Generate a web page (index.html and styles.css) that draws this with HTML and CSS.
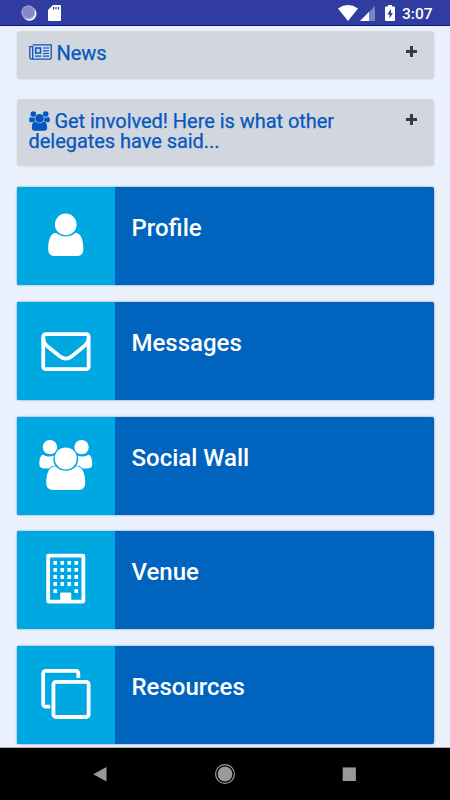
FILE: index.html
```html
<!DOCTYPE html>
<html lang="en">
<head>
  <meta charset="UTF-8" />
  <meta name="viewport" content="width=device-width, initial-scale=1.0"/>
  <title>Event | Home</title>
  <link rel="stylesheet" href="styles.css">
</head>
<body>

<header class="status-bar">
  <div class="status-left">
    <svg class="icon-sync" viewBox="0 0 16 16">
      <circle cx="8.5" cy="8.7" r="7" fill="#fff"/>
      <circle cx="7.3" cy="7.3" r="6.9" fill="#858ac7"/>
      <circle cx="7.3" cy="7.3" r="6.3" fill="none" stroke="#b5b8df" stroke-width="1.2" stroke-dasharray="1 1"/>
    </svg>
    <svg class="icon-sd" viewBox="0 0 13 16">
      <path d="M5 0h7a1 1 0 0 1 1 1v14a1 1 0 0 1-1 1H1a1 1 0 0 1-1-1V5z" fill="#fff"/>
      <path d="M5.500 2v2.600M8 2v2.600M10.500 2v2.600" stroke="#303c9f" stroke-width="1.2"/>
    </svg>
  </div>
  <div class="status-right">
    <svg class="icon-wifi" viewBox="0 0 20 16"><path d="M0 3.4Q10-3.4 20 3.4L10 16z" fill="#fff"/></svg>
    <svg class="icon-signal" viewBox="0 0 15 15">
      <path d="M15 0v15H0z" fill="#7c83c3"/>
      <path d="M9 6v9H0z" fill="#fff"/>
    </svg>
    <svg class="icon-battery" viewBox="0 0 10 16">
      <path d="M3 0h4v1.5h2a1 1 0 0 1 1 1V15a1 1 0 0 1-1 1H1a1 1 0 0 1-1-1V2.500a1 1 0 0 1 1-1h2z" fill="#fff"/>
      <path d="M6 3.800L2.300 9.500h2.200v4L7.900 8H6z" fill="#303c9f"/>
    </svg>
    <span class="clock">3:07</span>
  </div>
</header>

<main class="content">
  <section class="panel">
    <h4 class="panel-title">
      <svg class="icon-news" viewBox="0 0 23 16" fill="none" stroke="#0558bd">
        <path d="M3.700.8h18.500v12.900a1.400 1.400 0 0 1-1.400 1.400H2.300a1.500 1.500 0 0 1-1.500-1.500V2.700h2.900v11a1.400 1.400 0 0 1-1.400 1.400" stroke-width="1.300"/>
        <path d="M6.700 4h4.800v5H6.700z" stroke-width="1.500"/>
        <path d="M14 4h6M14 6.800h6M14 9.500h6M6 12.200h6.500M14 12.200h6" stroke-width="1.200"/>
      </svg>
      News
    </h4>
    <svg class="icon-plus" viewBox="0 0 11 11"><path d="M5.500 0v11M0 5.500h11" stroke="#3a3a3a" stroke-width="3"/></svg>
  </section>

  <section class="panel panel-involved">
    <h4 class="panel-title">
      <svg class="icon-group" viewBox="22.500 22.500 53 51" fill="#0558bd">
        <circle cx="33.200" cy="30.100" r="7.200"/>
        <circle cx="64.800" cy="30.100" r="7.200"/>
        <circle cx="49" cy="41.400" r="11"/>
        <path d="M26 37.400C29.500 40 34 40 37.200 38.500C36 42 36.500 45.500 38.500 48.500Q34.500 48.700 32 51.400H27Q22.500 51.400 22.500 46.500Q22.500 39.500 26 37.400z"/>
        <path d="M72 37.400C68.500 40 64 40 60.800 38.500C62 42 61.500 45.500 59.500 48.500Q63.500 48.700 66 51.400H71Q75.500 51.400 75.500 46.500Q75.500 39.500 72 37.400z"/>
        <path d="M38.500 49.200C45 55.300 53 55.300 59.500 49.200C66 49.500 68.500 57 68.500 66Q68.500 73 61.500 73H36.500Q29.500 73 29.500 66C29.500 57 32 49.500 38.500 49.200z"/>
      </svg>
      Get involved! Here is what other delegates have said...
    </h4>
    <svg class="icon-plus" viewBox="0 0 11 11"><path d="M5.500 0v11M0 5.500h11" stroke="#3a3a3a" stroke-width="3"/></svg>
  </section>

  <nav class="menu">
    <a class="menu-item">
      <svg class="menu-icon" viewBox="0.500 0 98 98" fill="#fff">
        <circle cx="49" cy="37.400" r="10.800"/>
        <path d="M39.300 45.800C45 50.800 53 50.800 58.700 45.800C64.500 46 66.600 54 66.600 62Q66.600 69 60.500 69H37.500Q31.400 69 31.400 62C31.400 54 33.500 46 39.300 45.800z"/>
      </svg>
      <span class="menu-label">Profile</span>
    </a>
    <a class="menu-item">
      <svg class="menu-icon" viewBox="0.500 0 98 98" fill="none" stroke="#fff" stroke-width="3.800">
        <rect x="26.500" y="32.100" width="45.400" height="35.100" rx="2.500"/>
        <path d="M26.500 36C26.500 41 29.500 43.500 34 47L43 54.200Q49 59 55 54.200L64 47C68.500 43.500 71.900 41 71.900 36"/>
      </svg>
      <span class="menu-label">Messages</span>
    </a>
    <a class="menu-item">
      <svg class="menu-icon" viewBox="0.500 0 98 98" fill="#fff">
        <circle cx="33.200" cy="30.100" r="7.200"/>
        <circle cx="64.800" cy="30.100" r="7.200"/>
        <circle cx="49" cy="41.400" r="11"/>
        <path d="M26 37.400C29.500 40 34 40 37.200 38.500C36 42 36.500 45.500 38.500 48.500Q34.500 48.700 32 51.400H27Q22.500 51.400 22.500 46.500Q22.500 39.500 26 37.400z"/>
        <path d="M72 37.400C68.500 40 64 40 60.800 38.500C62 42 61.500 45.500 59.500 48.500Q63.500 48.700 66 51.400H71Q75.500 51.400 75.500 46.500Q75.500 39.500 72 37.400z"/>
        <path d="M38.500 49.200C45 55.300 53 55.300 59.500 49.200C66 49.500 68.500 57 68.500 66Q68.500 73 61.500 73H36.500Q29.500 73 29.500 66C29.500 57 32 49.500 38.500 49.200z"/>
      </svg>
      <span class="menu-label">Social Wall</span>
    </a>
    <a class="menu-item">
      <svg class="menu-icon" viewBox="0.500 0 98 98" fill="none" stroke="#fff" stroke-width="3.800">
        <rect x="31.400" y="24.600" width="35.200" height="46" rx=".5"/>
        <path d="M36.700 31.900h25M36.700 38.900h25M36.700 46h25M36.700 53h25" stroke-dasharray="3.600 3.400"/>
        <path d="M36.700 60.200h3.600M57.700 60.200h3.600"/>
        <path d="M44.500 61.600h9a1 1 0 0 1 1 1v8h-11v-8a1 1 0 0 1 1-1z" fill="#fff" stroke="none"/>
      </svg>
      <span class="menu-label">Venue</span>
    </a>
    <a class="menu-item">
      <svg class="menu-icon" viewBox="0.500 0 98 98" fill="none" stroke="#fff" stroke-width="3.800">
        <path d="M61.600 32V27.300a2.500 2.500 0 0 0-2.500-2.500H28.900a2.500 2.500 0 0 0-2.500 2.500V58.200a2.500 2.500 0 0 0 2.500 2.500H33.500"/>
        <rect x="36.700" y="35.800" width="35.200" height="35.200" rx="2.500"/>
      </svg>
      <span class="menu-label">Resources</span>
    </a>
  </nav>
</main>

<footer class="nav-bar">
  <svg class="nav-icon" viewBox="0 0 22 22"><path d="M16.500 4v14.400L3.200 11.200z" fill="#999"/></svg>
  <svg class="nav-icon" viewBox="0 0 22 22">
    <circle cx="11" cy="11" r="9.400" fill="none" stroke="#999" stroke-width="1.200"/>
    <circle cx="11" cy="11" r="7.400" fill="#999"/>
  </svg>
  <svg class="nav-icon" viewBox="0 0 22 22"><path d="M4.700 4.400h13.200v13.600H4.700z" fill="#999"/></svg>
</footer>

</body>
</html>
```
FILE: styles.css
```css
* {
  margin: 0;
  padding: 0;
  box-sizing: border-box;
  font-family: Roboto, sans-serif;
}

body {
  height: 800px;
  display: flex;
  flex-direction: column;
  background: #eaf1fd;
  overflow: hidden;
}

svg {
  display: block;
  flex: none;
}

.status-bar {
  flex: none;
  height: 26px;
  display: flex;
  justify-content: space-between;
  padding: 5px 17.5px 0 21px;
  background: #303c9f;
  border-bottom: 1px solid #0b1289;
}

.status-left,
.status-right {
  display: flex;
  align-items: flex-start;
}

.icon-sync {
  width: 16px;
  height: 16px;
  margin-right: 11px;
}

.icon-sd {
  width: 13px;
  height: 16px;
}

.icon-wifi {
  width: 20px;
  height: 16px;
  margin-right: 2px;
}

.icon-signal {
  width: 15px;
  height: 15px;
  margin: 1px 10px 0 0;
}

.icon-battery {
  width: 10px;
  height: 16px;
  margin-right: 7px;
}

.clock {
  color: #fff;
  font-size: 15.5px;
  font-weight: 500;
  line-height: 18px;
}

.content {
  flex: 1;
  min-height: 0;
  padding: 5px 16px 0 16.5px;
  overflow: hidden;
}

.panel {
  display: flex;
  justify-content: space-between;
  align-items: flex-start;
  height: 47px;
  margin-bottom: 21px;
  padding: 12px 17px 0 12px;
  background: #d2d6df;
  border-radius: 3px;
  box-shadow: 0 1px 2px rgba(0, 0, 0, 0.15);
}

.panel-involved {
  height: 66px;
  margin-bottom: 22px;
}

.panel-title {
  width: 330px;
  color: #0558bd;
  font-size: 20px;
  font-weight: 400;
  line-height: 20px;
  letter-spacing: -0.04px;
  -webkit-text-stroke: 0.25px #0558bd;
}

.panel-title svg {
  display: inline-block;
}

.icon-news {
  width: 23px;
  height: 16px;
  vertical-align: 0;
}

.icon-group {
  width: 21px;
  height: 20px;
  vertical-align: -1px;
  margin: -3px 0 -2px;
}

.icon-plus {
  width: 11px;
  height: 11px;
  margin-top: 3px;
}

.menu-item {
  display: flex;
  height: 98px;
  margin-bottom: 16.75px;
  background: #0063be;
  border-radius: 2px;
  box-shadow: 0 0 2px rgba(0, 50, 110, 0.6);
  overflow: hidden;
}

.menu-icon {
  width: 98.5px;
  height: 98px;
  background: #00a8e2;
}

.menu-label {
  padding: 26px 0 0 16.5px;
  color: #fff;
  font-size: 24px;
  font-weight: 500;
  line-height: 30px;
}

.nav-bar {
  flex: none;
  height: 53px;
  display: flex;
  justify-content: center;
  gap: 102px;
  padding-top: 15px;
  background: #000;
  border-top: 1px solid #a9afb8;
}

.nav-icon {
  width: 22px;
  height: 22px;
}
```
